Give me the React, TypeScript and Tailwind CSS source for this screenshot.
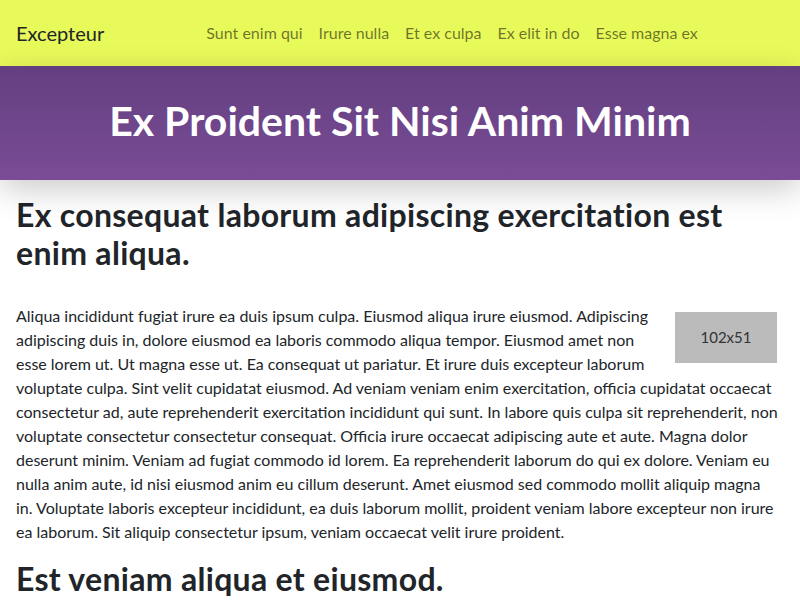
import React from "react";

export default function App() {
  const font = { fontFamily: "Lato, 'Open Sans', sans-serif" };
  const lines = [
    "Aliqua incididunt fugiat irure ea duis ipsum culpa. Eiusmod aliqua irure eiusmod. Adipiscing",
    "adipiscing duis in, dolore eiusmod ea laboris commodo aliqua tempor. Eiusmod amet non",
    "esse lorem ut. Ut magna esse ut. Ea consequat ut pariatur. Et irure duis excepteur laborum",
    "voluptate culpa. Sint velit cupidatat eiusmod. Ad veniam veniam enim exercitation, officia cupidatat occaecat",
    "consectetur ad, aute reprehenderit exercitation incididunt qui sunt. In labore quis culpa sit reprehenderit, non",
    "voluptate consectetur consectetur consequat. Officia irure occaecat adipiscing aute et aute. Magna dolor",
    "deserunt minim. Veniam ad fugiat commodo id lorem. Ea reprehenderit laborum do qui ex dolore. Veniam eu",
    "nulla anim aute, id nisi eiusmod anim eu cillum deserunt. Amet eiusmod sed commodo mollit aliquip magna",
    "in. Voluptate laboris excepteur incididunt, ea duis laborum mollit, proident veniam labore excepteur non irure",
    "ea laborum. Sit aliquip consectetur ipsum, veniam occaecat velit irure proident.",
  ];
  return (
    <div className="w-[800px] min-h-[600px] bg-white text-[#212529]" style={font}>
      <nav className="h-[66px] bg-[#e8f95a] flex items-center px-4">
        <span className="text-[20px] mr-4 text-[#212529]">Excepteur</span>
        <ul className="mx-auto flex text-[16px] text-black/55">
          <li className="px-2">Sunt enim qui</li>
          <li className="px-2">Irure nulla</li>
          <li className="px-2">Et ex culpa</li>
          <li className="px-2">Ex elit in do</li>
          <li className="px-2">Esse magna ex</li>
        </ul>
      </nav>
      <header className="relative z-10 h-[114px] flex items-center justify-center pb-1 bg-gradient-to-b from-[#633f80] to-[#7a4c96] shadow-[0_10px_30px_rgba(0,0,0,0.2)]">
        <h1 className="text-white text-[41px] font-bold">Ex Proident Sit Nisi Anim Minim</h1>
      </header>
      <main className="px-4 pt-4">
        <h2 className="text-[32px] leading-[1.2] font-bold tracking-[0.3px] mb-[31px]">
          Ex consequat laborum adipiscing exercitation est enim aliqua.
        </h2>
        <p className="text-[16px] leading-6 mb-4">
          <span className="float-right mt-2 mr-[7px] ml-4 w-[102px] h-[51px] bg-[#bbbbbb] flex items-center justify-center text-[15px] text-[#333]">
            102x51
          </span>
          {lines.map((l, i) => (
            <React.Fragment key={i}>
              {l}
              {i < lines.length - 1 && <br />}
            </React.Fragment>
          ))}
        </p>
        <h2 className="text-[32px] leading-[1.2] font-bold tracking-[0.3px]">Est veniam aliqua et eiusmod.</h2>
      </main>
    </div>
  );
}
